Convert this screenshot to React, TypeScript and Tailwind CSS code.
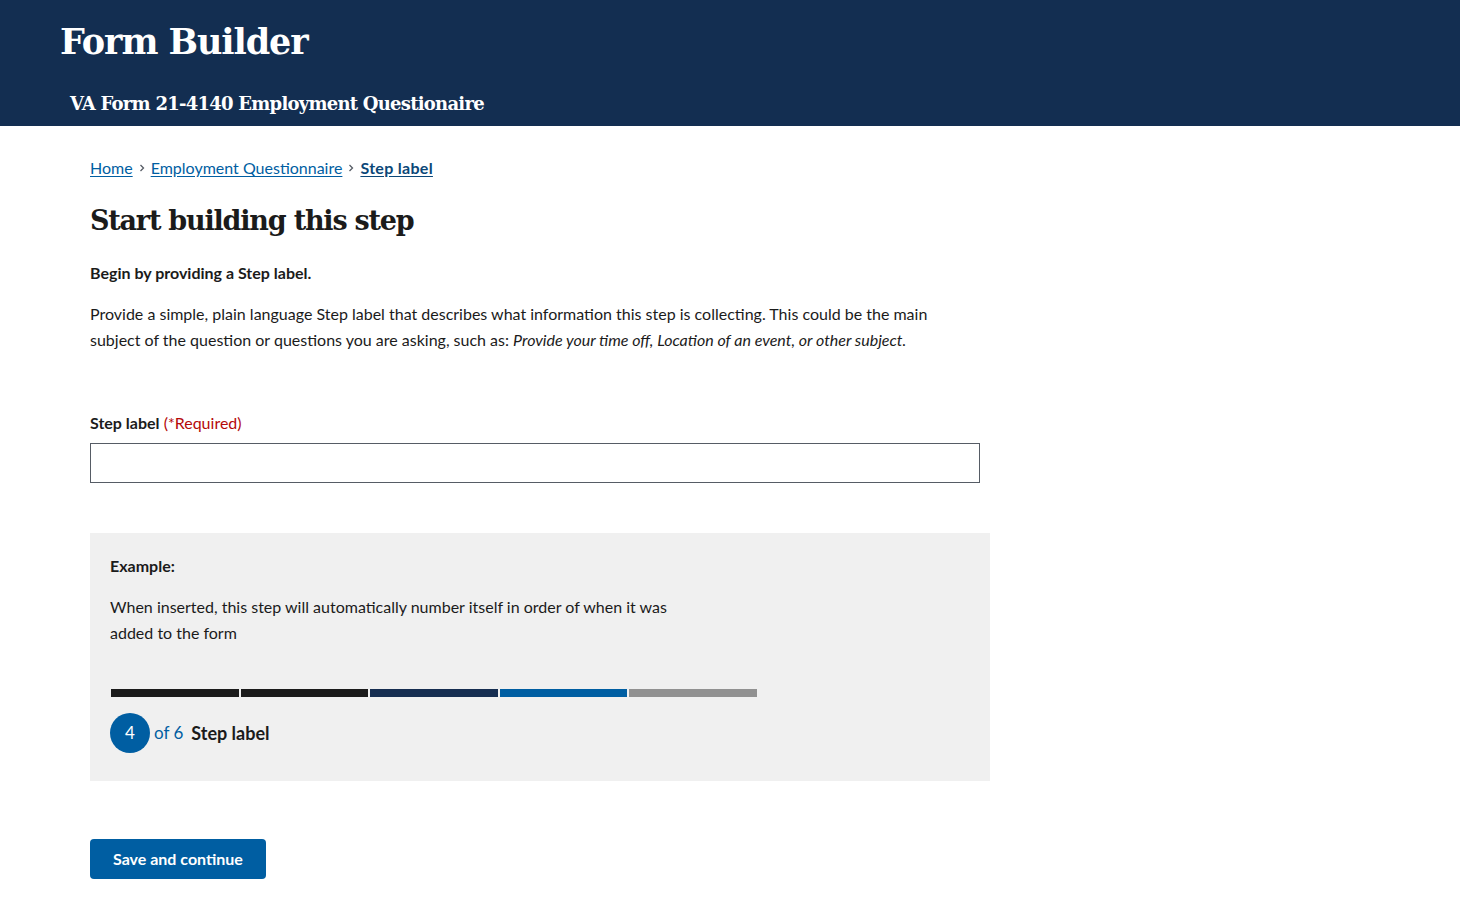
import React from "react";

const serif = { fontFamily: '"DejaVu Serif", "Liberation Serif", serif' };

export default function App() {
  return (
    <div className="min-h-[909px] bg-white text-[#1b1b1b]" style={{ fontFamily: 'Lato, "Open Sans", sans-serif' }}>
      <header className="bg-[#132e51] h-[126px] pl-[60px] pt-[18px] text-white">
        <h1 className="text-[35px] font-bold leading-[48px] tracking-[-1.1px]" style={serif}>Form Builder</h1>
        <div className="pl-[10px] pt-[25px] text-[18px] font-bold leading-[26px] tracking-[-0.75px]" style={serif}>
          VA Form 21-4140 Employment Questionaire
        </div>
      </header>

      <main className="pl-[90px] w-[990px]">
        <nav className="mt-[32px] flex items-center text-[16px] leading-[20px] text-[#005ea2]">
          <a className="underline underline-offset-2">Home</a>
          <svg className="mx-[4px]" width="10" height="10" viewBox="0 0 10 10"><path d="M3.5 2 L6.5 5 L3.5 8" fill="none" stroke="#565c65" strokeWidth="1.3" /></svg>
          <a className="underline underline-offset-2">Employment Questionnaire</a>
          <svg className="mx-[4px]" width="10" height="10" viewBox="0 0 10 10"><path d="M3.5 2 L6.5 5 L3.5 8" fill="none" stroke="#565c65" strokeWidth="1.3" /></svg>
          <a className="underline underline-offset-2 font-bold text-[#0b4778] tracking-[0.3px]">Step label</a>
        </nav>

        <h2 className="mt-[23px] text-[27px] font-bold leading-[40px] tracking-[-1.2px]" style={serif}>Start building this step</h2>

        <p className="mt-[20px] text-[16px] font-bold leading-[24px]">Begin by providing a Step label.</p>
        <p className="mt-[16px] text-[16px] leading-[26px] w-[870px]">
          Provide a simple, plain language Step label that describes what information this step is collecting. This could be the main subject of the question or questions you are asking, such as: <em>Provide your time off, Location of an event, or other subject.</em>
        </p>

        <label className="block mt-[58px] text-[16px] leading-[24px]">
          <span className="font-bold">Step label</span> <span className="text-[#b50909]">(*Required)</span>
        </label>
        <input className="block mt-[8px] w-[890px] h-[40px] border border-[#565c65] px-2 outline-none" />

        <section className="mt-[50px] bg-[#f0f0f0] px-[20px] pt-[21px] pb-[28px]">
          <p className="text-[16px] font-bold leading-[24px]">Example:</p>
          <p className="mt-[16px] text-[16px] leading-[26px] w-[570px]">
            When inserted, this step will automatically number itself in order of when it was added to the form
          </p>
          <div className="mt-[43px] flex gap-[2px] w-[647px] pl-[1px]">
            <div className="h-[8px] flex-1 bg-[#1b1b1b]" />
            <div className="h-[8px] flex-1 bg-[#1b1b1b]" />
            <div className="h-[8px] flex-1 bg-[#162e51]" />
            <div className="h-[8px] flex-1 bg-[#005ea2]" />
            <div className="h-[8px] flex-1 bg-[#919191]" />
          </div>
          <div className="mt-[16px] flex items-center">
            <div className="w-[40px] h-[40px] rounded-full bg-[#005ea2] text-white flex items-center justify-center text-[17px]">4</div>
            <span className="ml-[4px] text-[17px] text-[#005ea2]">of 6</span>
            <span className="ml-[8px] text-[18px] font-bold">Step label</span>
          </div>
        </section>

        <button className="mt-[58px] h-[40px] px-[23px] rounded-[4px] bg-[#005ea2] text-white text-[16px] font-bold">
          Save and continue
        </button>
      </main>
    </div>
  );
}
